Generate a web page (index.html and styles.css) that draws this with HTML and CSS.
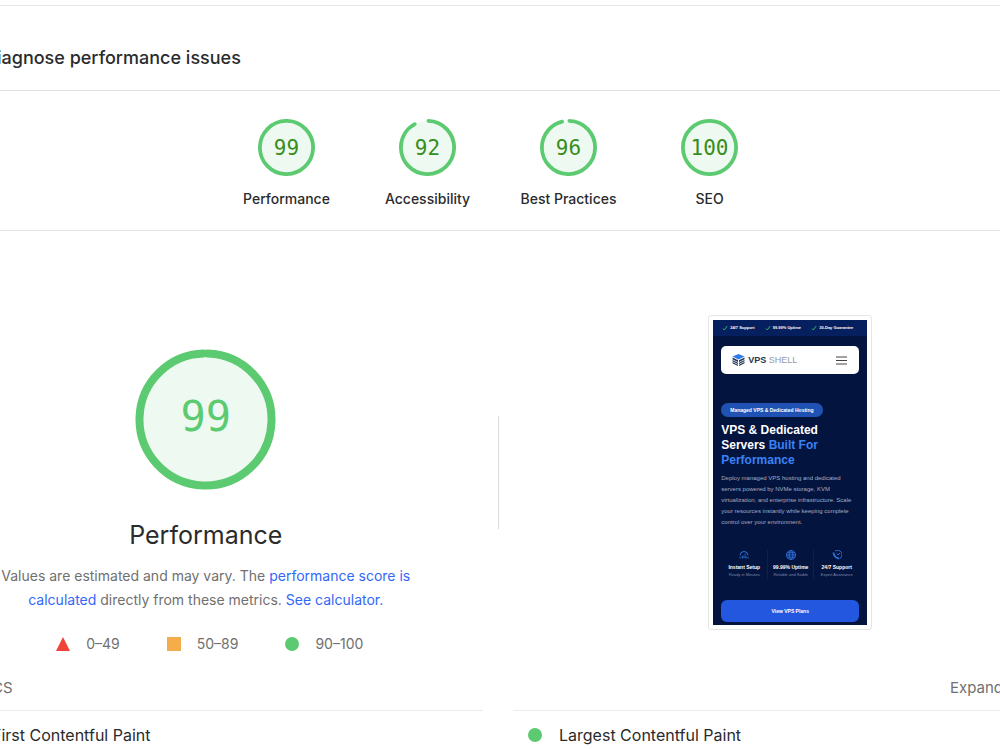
FILE: index.html
```html
<!DOCTYPE html>
<html lang="en">
<head>
<meta charset="utf-8">
<meta name="viewport" content="width=device-width, initial-scale=1">
<title>Performance report</title>
<link rel="stylesheet" href="styles.css">
</head>
<body>
<main class="page">
  <header class="section-head">
    <h1 class="section-title">Diagnose performance issues</h1>
  </header>

  <nav class="scores" aria-label="Categories">
    <a class="score" href="#performance">
      <span class="gauge">
        <svg viewBox="0 0 120 120" aria-hidden="true"><circle class="gauge-base" cx="60" cy="60" r="56"/><circle class="gauge-arc" cx="60" cy="60" r="56" pathLength="100" stroke-dasharray="98.6 100" transform="rotate(-88 60 60)"/></svg>
        <span class="gauge-value">99</span>
      </span>
      <span class="score-label">Performance</span>
    </a>
    <a class="score" href="#accessibility">
      <span class="gauge">
        <svg viewBox="0 0 120 120" aria-hidden="true"><circle class="gauge-base" cx="60" cy="60" r="56"/><circle class="gauge-arc" cx="60" cy="60" r="56" pathLength="100" stroke-dasharray="91 100" transform="rotate(-88 60 60)"/></svg>
        <span class="gauge-value">92</span>
      </span>
      <span class="score-label">Accessibility</span>
    </a>
    <a class="score" href="#best-practices">
      <span class="gauge">
        <svg viewBox="0 0 120 120" aria-hidden="true"><circle class="gauge-base" cx="60" cy="60" r="56"/><circle class="gauge-arc" cx="60" cy="60" r="56" pathLength="100" stroke-dasharray="95 100" transform="rotate(-88 60 60)"/></svg>
        <span class="gauge-value">96</span>
      </span>
      <span class="score-label">Best Practices</span>
    </a>
    <a class="score" href="#seo">
      <span class="gauge">
        <svg viewBox="0 0 120 120" aria-hidden="true"><circle class="gauge-base" cx="60" cy="60" r="56"/><circle class="gauge-arc" cx="60" cy="60" r="56"/></svg>
        <span class="gauge-value">100</span>
      </span>
      <span class="score-label">SEO</span>
    </a>
  </nav>

  <section class="report" id="performance">
    <div class="overview">
      <div class="summary">
        <div class="gauge gauge-large">
          <svg viewBox="0 0 141 141" aria-hidden="true"><circle class="gauge-base" cx="70.5" cy="70.5" r="66"/><circle class="gauge-arc" cx="70.5" cy="70.5" r="66" pathLength="100" stroke-dasharray="99 100" transform="rotate(-88 70.5 70.5)"/></svg>
          <span class="gauge-value">99</span>
        </div>
        <h2 class="summary-title">Performance</h2>
        <p class="summary-text">Values are estimated and may vary. The <a href="#scoring">performance score is calculated</a> directly from these metrics. <a href="#calculator">See calculator.</a></p>
        <ul class="legend">
          <li><svg class="mark" viewBox="0 0 14 14" aria-hidden="true"><path d="M7 0 14 14H0Z" fill="#f04438"/></svg>0–49</li>
          <li><svg class="mark" viewBox="0 0 14 14" aria-hidden="true"><path d="M0 0H14V14H0Z" fill="#f5ad4b"/></svg>50–89</li>
          <li><svg class="mark" viewBox="0 0 14 14" aria-hidden="true"><circle cx="7" cy="7" r="7" fill="#5cca70"/></svg>90–100</li>
        </ul>
      </div>
      <div class="divider"></div>
      <div class="preview">
        <div class="shot">
          <div class="site">
            <div class="site-bar">
              <span><svg class="tick" viewBox="0 0 6 6" aria-hidden="true"><path d="M1 3.5 2.3 5 5.2 1"/></svg>24/7 Support</span>
              <span><svg class="tick" viewBox="0 0 6 6" aria-hidden="true"><path d="M1 3.5 2.3 5 5.2 1"/></svg>99.99% Uptime</span>
              <span><svg class="tick" viewBox="0 0 6 6" aria-hidden="true"><path d="M1 3.5 2.3 5 5.2 1"/></svg>30-Day Guarantee</span>
            </div>
            <div class="site-nav">
              <svg class="site-logo" viewBox="0 0 26 24" aria-hidden="true"><path fill="#2f7bea" d="M13 0 25 5 13 11 1 5Z"/><path fill="#1d3557" d="M1 7 12 12.500V16L1 10.500ZM1 12 12 17.500V20L1 14.500ZM1 16 12 21.500V24L1 18.500ZM25 7 14 12.500V16L25 10.500ZM25 12 14 17.500V20L25 14.500ZM25 16 14 21.500V24L25 18.500Z"/></svg>
              <span class="site-name"><b>VPS</b> SHELL</span>
              <button class="site-menu" type="button" aria-label="Menu"><svg viewBox="0 0 11 9" aria-hidden="true"><path d="M0 1H11M0 4.500H11M0 8H11"/></svg></button>
            </div>
            <span class="site-badge">Managed VPS &amp; Dedicated Hosting</span>
            <h3 class="site-title">VPS &amp; Dedicated<br>Servers <em>Built For<br>Performance</em></h3>
            <p class="site-text">Deploy managed VPS hosting and dedicated<br>servers powered by NVMe storage, KVM<br>virtualization, and enterprise infrastructure. Scale<br>your resources instantly while keeping complete<br>control over your environment.</p>
            <ul class="site-features">
              <li><svg viewBox="0 0 10 10" aria-hidden="true"><path d="M1 5.500A4 4 0 0 1 9 5.500M5 5.500 7 3.500M3.500 8.500 3 6 5 7.500 7 6V8.500M1 7V8.500M9 7V8.500"/></svg><b>Instant Setup</b><span>Ready in Minutes</span></li>
              <li><svg viewBox="0 0 10 10" aria-hidden="true"><path d="M5 .5A4.500 4.500 0 1 1 5 9.500 4.500 4.500 0 0 1 5 .5C2.500 3 2.500 7 5 9.500 7.500 7 7.500 3 5 .5M.5 5H9.500M1.200 2.800H8.800M1.200 7.200H8.800"/></svg><b>99.99% Uptime</b><span>Reliable and Stable</span></li>
              <li><svg viewBox="0 0 10 10" aria-hidden="true"><path d="M3 1A4.400 4.400 0 1 1 8 8.500M5 3.500 6 5 8 3" /><path stroke-width="1.800" d="M1.500 2.500C1.500 5.500 4 8.500 7.300 8.500"/></svg><b>24/7 Support</b><span>Expert Assistance</span></li>
            </ul>
            <button class="site-cta" type="button">View VPS Plans</button>
          </div>
        </div>
      </div>
    </div>

    <div class="metrics-head">
      <h3 class="metrics-title">METRICS</h3>
      <button class="expand" type="button">Expand view</button>
    </div>
    <div class="metrics">
      <div class="metric"><svg class="mark" viewBox="0 0 14 14" aria-hidden="true"><circle cx="7" cy="7" r="7" fill="#5cca70"/></svg>First Contentful Paint</div>
      <div class="metric"><svg class="mark" viewBox="0 0 14 14" aria-hidden="true"><circle cx="7" cy="7" r="7" fill="#5cca70"/></svg>Largest Contentful Paint</div>
    </div>
  </section>
</main>
</body>
</html>
```

FILE: styles.css
```css
* { box-sizing: border-box; }

body {
  margin: 0;
  overflow: hidden;
  background: #fff;
  color: #2a2b2d;
  font-family: Inter, "Liberation Sans", sans-serif;
  font-size: 14px;
  line-height: 24px;
}

h1, h2, h3, p, ul { margin: 0; padding: 0; font-weight: 400; }
ul { list-style: none; }
a { color: #3367f6; text-decoration: none; }
button { border: 0; padding: 0; background: none; font: inherit; color: inherit; }

.page { padding-top: 5px; overflow: hidden; }

.section-head {
  padding: 39px 0 20px;
  border-top: 1px solid #e8e8e8;
  border-bottom: 1px solid #dfdfdf;
}

.section-title {
  margin-left: -16px;
  font-size: 18px;
  font-weight: 500;
  line-height: 25px;
}

/* Category scores */
.scores {
  display: flex;
  justify-content: center;
  padding: 28px 4px 19px 0;
  border-bottom: 1px solid #e3e3e3;
}

.score {
  display: flex;
  flex-direction: column;
  align-items: center;
  gap: 11px;
  width: 141px;
  color: inherit;
  font-weight: 500;
}

.gauge {
  display: grid;
  width: 57px;
  height: 57px;
  place-items: center;
}
.gauge > * { grid-area: 1 / 1; }
.gauge svg { display: block; width: 100%; height: 100%; }
.gauge-base { fill: #eefaf1; }
.gauge-arc {
  fill: none;
  stroke: #5cca70;
  stroke-width: 8;
  stroke-linecap: round;
}
.gauge-value {
  color: #388e1c;
  font-family: "DejaVu Sans Mono", monospace;
  font-size: 21px;
  font-weight: 400;
}

.gauge-large { width: 141px; height: 141px; }
.gauge-large .gauge-value { padding-bottom: 6px; color: #5cca70; font-size: 42px; }

/* The report runs past both edges of the window */
.report { margin: 0 -82px 0 -86px; }

.overview {
  display: grid;
  grid-template-columns: 1fr 1px 1fr;
  align-items: start;
  padding-top: 84px;
}

.summary {
  display: flex;
  flex-direction: column;
  align-items: center;
  padding-top: 34px;
}
.summary-title { margin-top: 29px; font-size: 25px; line-height: 32px; }
.summary-text {
  width: 420px;
  margin-top: 13px;
  color: #707070;
  text-align: center;
}

.legend { display: flex; gap: 47px; margin-top: 20px; padding-left: 8px; color: #707070; }
.legend li { display: flex; align-items: center; gap: 16px; }
.mark { width: 14px; height: 14px; flex: none; }

.divider { height: 113px; margin-top: 101px; background: #dcdcdc; }

.preview { display: flex; justify-content: center; }
.shot {
  padding: 4px;
  border: 1px solid #e6e6e6;
  border-radius: 3px;
}

/* Mobile page inside the preview frame */
.site {
  display: flex;
  flex-direction: column;
  width: 154px;
  padding: 0 8px 3px;
  background: #03143f;
  color: #fff;
  font-family: "Liberation Sans", sans-serif;
}
.site-bar {
  display: flex;
  justify-content: space-between;
  margin: 0 -8px;
  padding: 0 14px 0 9px;
  background: #06205f;
  font-size: 4px;
  font-weight: 700;
  line-height: 16px;
  white-space: nowrap;
}
.site-bar span { display: flex; align-items: center; gap: 2px; }
.tick { width: 6px; height: 6px; fill: none; stroke: #39a96b; }

.site-nav {
  display: flex;
  align-items: center;
  gap: 3px;
  margin-top: 10px;
  padding: 0 12px 0 11px;
  border-radius: 5px;
  background: #fff;
  line-height: 28px;
}
.site-logo { width: 13px; height: 12px; }
.site-name { color: #929aa5; font-size: 9px; }
.site-name b { color: #24364f; }
.site-menu { display: flex; margin-left: auto; }
.site-menu svg { width: 11px; height: 9px; stroke: #444; }

.site-badge {
  align-self: flex-start;
  margin-top: 29px;
  padding: 0 9px;
  border-radius: 7px;
  background: #2052b3;
  font-size: 5px;
  font-weight: 700;
  line-height: 14px;
}
.site-title {
  margin-top: 6px;
  font-size: 12px;
  font-weight: 700;
  line-height: 15px;
  white-space: nowrap;
}
.site-title em { color: #3b82f6; font-style: normal; }
.site-text {
  margin-top: 5px;
  color: #a3acc0;
  font-size: 6px;
  line-height: 11px;
  white-space: nowrap;
}

.site-features {
  display: grid;
  grid-template-columns: repeat(3, 1fr);
  margin-top: 22px;
}
.site-features li {
  display: flex;
  flex-direction: column;
  align-items: center;
  font-size: 5px;
  line-height: 8px;
  white-space: nowrap;
}
.site-features li + li { border-left: 1px solid #0b2150; }
.site-features svg {
  width: 10px;
  height: 10px;
  margin-bottom: 3px;
  fill: none;
  stroke: #2f6fdc;
}
.site-features span { color: #7f8aa6; font-size: 4px; }
.site-cta {
  margin-top: 21px;
  border-radius: 6px;
  background: #2457e0;
  font-size: 5px;
  font-weight: 700;
  line-height: 22px;
}

/* Metrics */
.metrics-head {
  display: flex;
  justify-content: space-between;
  margin-top: 20px;
  padding-left: 32px;
  color: #707070;
  font-size: 15px;
}
.metrics-title { font-size: 15px; }
.expand { padding-right: 42px; }

.metrics {
  display: grid;
  grid-template-columns: 1fr 1fr;
  gap: 30px;
  margin-top: 10px;
}
.metric {
  display: flex;
  align-items: center;
  gap: 17px;
  padding: 12px 15px;
  border-top: 1px solid #ebebeb;
  font-size: 16px;
}
.metric:first-child { padding-left: 47px; }
```
